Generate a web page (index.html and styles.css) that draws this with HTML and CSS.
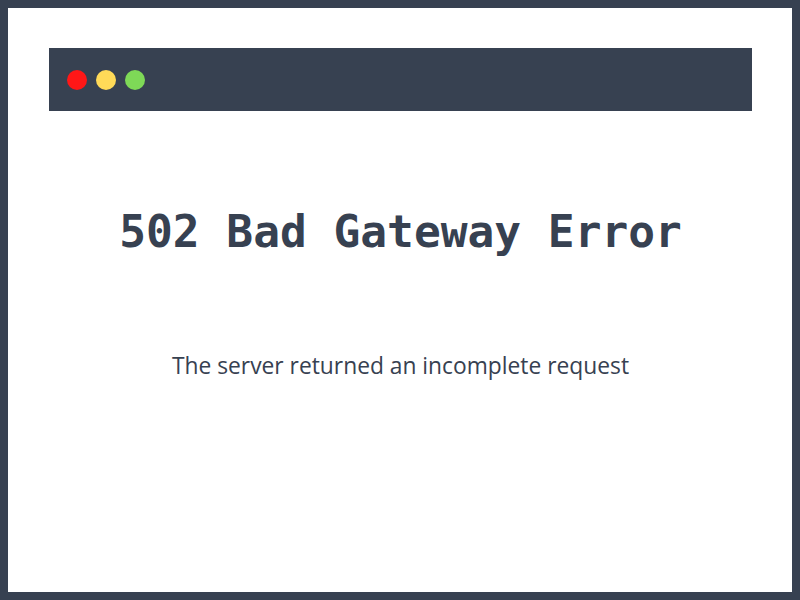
FILE: index.html
```html
<!DOCTYPE html>
<html lang="en">
<head>
    <meta charset="UTF-8">
    <meta name="viewport" content="width=device-width, initial-scale=1.0">
    <link rel="stylesheet" href="styles.css">
    <title>502 Bad Gateway Error</title>
</head>
<body>
    <div class="frame">
        <div class="window-bar">
            <span class="dot dot-red"></span>
            <span class="dot dot-yellow"></span>
            <span class="dot dot-green"></span>
        </div>
        <h1 class="error-title">502 Bad Gateway Error</h1>
        <p class="error-text">The server returned an incomplete request</p>
    </div>
</body>
</html>
```

FILE: styles.css
```css
html, body {
    margin: 0;
    height: 100%;
}

body {
    box-sizing: border-box;
    border: 8px solid #374151;
    background-color: #fff;
    color: #374151;
}

.frame {
    padding: 40px 40px 0 41px;
}

.window-bar {
    display: flex;
    align-items: center;
    gap: 9px;
    height: 63px;
    padding-left: 18px;
    background-color: #374151;
}

.dot {
    width: 20px;
    height: 20px;
    border-radius: 50%;
}

.dot-red {
    background-color: #ff1717;
}

.dot-yellow {
    background-color: #ffda58;
}

.dot-green {
    background-color: #7ed957;
}

.error-title {
    margin: 99px 0 0;
    font-family: "DejaVu Sans Mono", "Liberation Mono", monospace;
    font-size: 44.5px;
    font-weight: bold;
    line-height: 1;
    text-align: center;
}

.error-text {
    margin: 100px 0 0;
    font-family: "Open Sans", "Noto Sans", sans-serif;
    font-size: 22.8px;
    line-height: 1;
    text-align: center;
}
```
